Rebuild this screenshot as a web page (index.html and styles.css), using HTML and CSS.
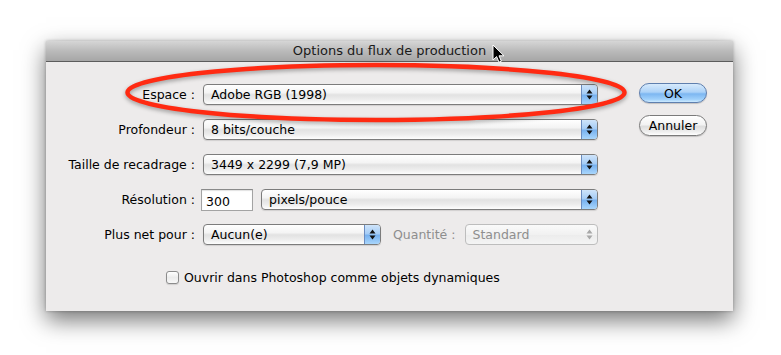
FILE: index.html
```html
<!DOCTYPE html>
<html lang="fr">
<head>
    <meta charset="UTF-8">
    <title>Options du flux de production</title>
    <link rel="stylesheet" href="styles.css">
</head>
<body>
    <div class="stage">
        <div class="window">
            <div class="titlebar">Options du flux de production</div>
            <div class="content">
                <div class="form">
                    <span class="label">Espace :</span>
                    <div class="popup">
                        <span class="value">Adobe RGB (1998)</span>
                        <span class="arrows"><svg viewBox="0 0 7 13"><path d="M3.5 1.5 6.5 5.5H.5zM3.5 11.5 6.5 7.5H.5z"/></svg></span>
                    </div>

                    <span class="label">Profondeur :</span>
                    <div class="popup">
                        <span class="value">8 bits/couche</span>
                        <span class="arrows"><svg viewBox="0 0 7 13"><path d="M3.5 1.5 6.5 5.5H.5zM3.5 11.5 6.5 7.5H.5z"/></svg></span>
                    </div>

                    <span class="label">Taille de recadrage :</span>
                    <div class="popup">
                        <span class="value">3449 x 2299 (7,9 MP)</span>
                        <span class="arrows"><svg viewBox="0 0 7 13"><path d="M3.5 1.5 6.5 5.5H.5zM3.5 11.5 6.5 7.5H.5z"/></svg></span>
                    </div>

                    <span class="label">Résolution :</span>
                    <div class="control-row">
                        <div class="field">300</div>
                        <div class="popup grow">
                            <span class="value">pixels/pouce</span>
                            <span class="arrows"><svg viewBox="0 0 7 13"><path d="M3.5 1.5 6.5 5.5H.5zM3.5 11.5 6.5 7.5H.5z"/></svg></span>
                        </div>
                    </div>

                    <span class="label">Plus net pour :</span>
                    <div class="control-row">
                        <div class="popup short">
                            <span class="value">Aucun(e)</span>
                            <span class="arrows"><svg viewBox="0 0 7 13"><path d="M3.5 1.5 6.5 5.5H.5zM3.5 11.5 6.5 7.5H.5z"/></svg></span>
                        </div>
                        <span class="label disabled">Quantité :</span>
                        <div class="popup grow disabled">
                            <span class="value">Standard</span>
                            <span class="arrows"><svg viewBox="0 0 7 13"><path d="M3.5 1.5 6.5 5.5H.5zM3.5 11.5 6.5 7.5H.5z"/></svg></span>
                        </div>
                    </div>
                </div>

                <div class="buttons">
                    <button class="push default">OK</button>
                    <button class="push">Annuler</button>
                </div>
            </div>

            <label class="check">
                <span class="box"></span>
                Ouvrir dans Photoshop comme objets dynamiques
            </label>
        </div>

        <!-- red highlight drawn over the dialog -->
        <svg class="highlight" viewBox="0 0 781 355">
            <ellipse cx="376" cy="92.5" rx="248.5" ry="27.5"/>
        </svg>

        <svg class="cursor" viewBox="0 0 12 19">
            <path d="M1 1v15l3.6-3.4 2.4 5.6 2.4-1-2.4-5.4H12z"/>
        </svg>
    </div>
</body>
</html>
```

FILE: styles.css
```css
:root {
    --body-bg: #edebeb;
    --text-color: #000;
    --muted-text: #8e8e8e;
    --popup-border: #7c7c7c;
    --aqua-border: #5f7fae;
    --ellipse-red: #ff2a12;
}

body {
    margin: 0;
    background-color: #fff;
    font-family: "DejaVu Sans", "Liberation Sans", sans-serif;
    font-size: 12.5px;
    color: var(--text-color);
}

.stage {
    position: relative;
    width: 781px;
    height: 355px;
    padding: 41px 0 0 46px;
    box-sizing: border-box;
    overflow: hidden;
}

.window {
    width: 687px;
    height: 270px;
    background-color: var(--body-bg);
    box-shadow: 0 9px 22px rgba(0, 0, 0, 0.55), 0 0 3px rgba(0, 0, 0, 0.25);
    display: flex;
    flex-direction: column;
}

.titlebar {
    height: 20px;
    line-height: 20px;
    border-bottom: 1px solid #5c5c5c;
    background: linear-gradient(#d6d6d6, #bababa 50%, #a6a6a6);
    text-align: center;
    font-size: 13px;
    color: #1a1a1a;
}

.content {
    display: flex;
    align-items: flex-start;
    padding-top: 22px;
}

.form {
    display: grid;
    grid-template-columns: 149px 395px;
    grid-auto-rows: 21px;
    column-gap: 8px;
    row-gap: 14px;
    align-items: center;
}

.label {
    text-align: right;
    white-space: nowrap;
}

.label.disabled {
    color: var(--muted-text);
    margin: 0 9px 0 12px;
}

.control-row {
    display: flex;
    align-items: center;
    height: 21px;
}

.popup {
    height: 21px;
    box-sizing: border-box;
    border: 1px solid var(--popup-border);
    border-radius: 4px;
    background: linear-gradient(#fff, #f4f4f4 40%, #e2e2e2 52%, #ececec 75%, #fdfdfd);
    box-shadow: 0 1px 1px rgba(0, 0, 0, 0.12);
    display: flex;
    align-items: center;
    overflow: hidden;
}

.popup .value {
    padding-left: 7px;
    white-space: nowrap;
}

.popup .arrows {
    margin-left: auto;
    width: 15px;
    height: 100%;
    border-left: 1px solid #6b8cbf;
    background: linear-gradient(#cfe4fa, #a6cdf6 45%, #78b2f0 55%, #a9d6fc);
    display: flex;
    align-items: center;
    justify-content: center;
}

.popup .arrows svg {
    width: 7px;
    height: 13px;
    fill: #111;
}

.popup.grow {
    flex: 1;
}

.popup.short {
    width: 178px;
}

.popup.disabled {
    border-color: #bdbdbd;
    background: linear-gradient(#fafafa, #f1f1f1 50%, #ececec 52%, #f4f4f4);
    box-shadow: none;
}

.popup.disabled .value {
    color: var(--muted-text);
}

.popup.disabled .arrows {
    border-left: none;
    background: none;
}

.popup.disabled .arrows svg {
    fill: #a8a8a8;
}

.field {
    width: 52px;
    height: 22px;
    box-sizing: border-box;
    margin: 0 8px 0 -2px;
    padding: 4px 0 0 4px;
    border: 1px solid #a3a3a3;
    border-top-color: #8a8a8a;
    background-color: #fff;
    box-shadow: inset 0 1px 1px rgba(0, 0, 0, 0.12);
}

.buttons {
    display: flex;
    flex-direction: column;
    gap: 12px;
    margin: -1px 0 0 41px;
}

.push {
    width: 68px;
    height: 21px;
    padding: 0;
    border: 1px solid #7a7a7a;
    border-radius: 11px;
    background: linear-gradient(#fff, #f3f3f3 45%, #dedede 55%, #f0f0f0 85%, #fff);
    box-shadow: 0 1px 1px rgba(0, 0, 0, 0.18);
    font-family: inherit;
    font-size: 12.5px;
    color: var(--text-color);
}

.push.default {
    height: 20px;
    border-color: var(--aqua-border);
    background: linear-gradient(#d7eafc, #acd2f8 45%, #7db7f1 55%, #9fd0fb 85%, #cdeafe);
}

.check {
    display: flex;
    align-items: center;
    gap: 5px;
    margin: 25px 0 0 120px;
}

.check .box {
    width: 13px;
    height: 13px;
    box-sizing: border-box;
    border: 1px solid #8c8c8c;
    border-radius: 3px;
    background: linear-gradient(#fff, #ececec 50%, #f8f8f8);
    box-shadow: 0 1px 1px rgba(0, 0, 0, 0.12);
}

.highlight {
    position: absolute;
    left: 0;
    top: 0;
    width: 781px;
    height: 355px;
    pointer-events: none;
    filter: drop-shadow(0 2px 2px rgba(0, 0, 0, 0.35));
}

.highlight ellipse {
    fill: none;
    stroke: var(--ellipse-red);
    stroke-width: 4.5;
}

.cursor {
    position: absolute;
    left: 492px;
    top: 44px;
    width: 12px;
    height: 19px;
    fill: #000;
    stroke: #fff;
    stroke-width: 1;
}
```
